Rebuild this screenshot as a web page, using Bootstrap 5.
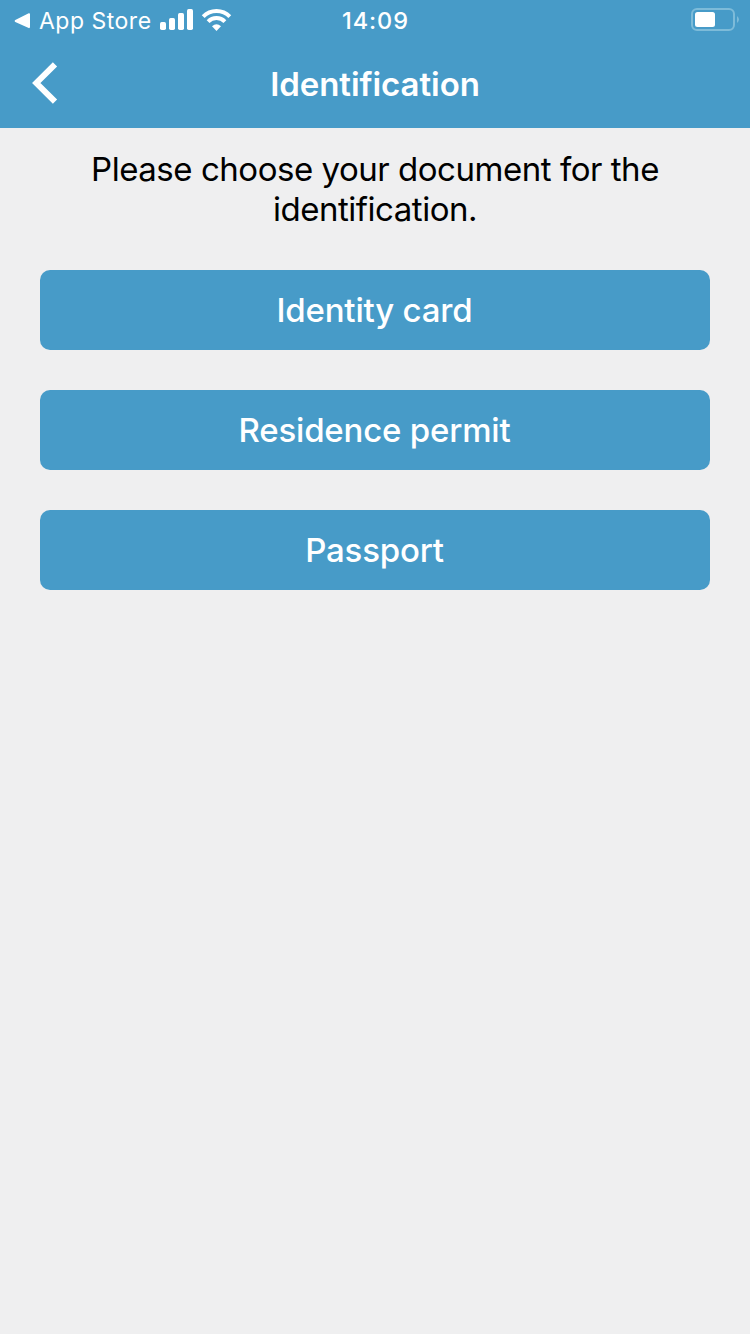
<!DOCTYPE html>
<html lang="en">
<head>
<meta charset="utf-8">
<meta name="viewport" content="width=device-width, initial-scale=1">
<title>Identification</title>
<link href="https://cdn.jsdelivr.net/npm/bootstrap@5.3.0/dist/css/bootstrap.min.css" rel="stylesheet">
<style>
  body { background: #efeff0; font-family: Inter, "Liberation Sans", sans-serif; color: #000; }
  .app-blue { background: #479bc8; color: #fff; }
  .status-row { height: 40px; padding: 0 11px 0 14px; line-height: 40px; }
  .status-row svg, .title-row svg { display: block; }
  .status-row svg { margin-bottom: 2px; }
  .status-row svg.return-mark { margin-bottom: 0; }
  .store-label { font-size: 23px; letter-spacing: .5px; margin: 1px 9px 0 9px; font-weight: 400; width: 112px; }
  .clock { font-size: 23.5px; font-weight: 500; letter-spacing: .9px; padding-top: 1px; margin-left: -2px; }
  .title-row { height: 88px; }
  .title-text { font-size: 33px; line-height: 88px; font-weight: 600; letter-spacing: -.05px; }
  .back-btn { padding: 0 32px; margin-bottom: 2px; }
  .prompt { font-size: 33px; line-height: 40px; padding-top: 21px; margin-bottom: 1px; letter-spacing: -.47px; }
  .choices { padding: 40px; gap: 40px; }
  .choice { height: 80px; border: 0; border-radius: 10px; font-size: 33px; line-height: 40px; font-weight: 500; letter-spacing: -.2px; padding-left: 11px; }
  .choice:hover { background: #3b8fbc; color: #fff; }
</style>
</head>
<body>
<header class="app-blue">
  <div class="status-row row g-0 align-items-center">
    <div class="col d-flex align-items-center">
      <svg class="return-mark" width="16" height="16" viewBox="0 0 16 16" fill="#fff"><path d="M14.700.3 1.300 7.100q-1.300.9 0 1.800l13.400 6.200q1.300.2 1.300-1V1.300q0-1.400-1.300-1z"/></svg>
      <span class="store-label text-nowrap">App Store</span>
      <svg width="33" height="21" viewBox="0 0 33 21" fill="#fff"><rect y="13" width="6" height="8" rx="1.7"/><rect x="9" y="9" width="6" height="12" rx="1.7"/><rect x="18" y="4" width="6" height="17" rx="1.7"/><rect x="27" width="6" height="21" rx="1.7"/></svg>
      <svg class="ms-2" width="31" height="22" viewBox="0 0 31 22" fill="none" stroke="#fff" stroke-width="4"><path d="M2.200 7.700a18.600 18.600 0 0 1 26.600 0"/><path d="M7.100 12.600a11.800 11.800 0 0 1 16.800 0"/><path d="M11 17.300q4.500-4.100 9 0L15.500 22z" fill="#fff" stroke="none"/></svg>
    </div>
    <div class="col-auto clock">14:09</div>
    <div class="col d-flex justify-content-end">
      <svg width="48" height="24" viewBox="0 0 48 24"><rect x="1" y="1" width="42" height="21" rx="5" fill="none" stroke="#7dbbd9" stroke-width="2"/><rect x="4" y="4" width="20" height="15" rx="2.5" fill="#fff"/><path d="M46 8q4 3.500 0 7z" fill="#7dbbd9"/></svg>
    </div>
  </div>
  <div class="title-row row g-0 align-items-center">
    <div class="col"><button class="btn back-btn border-0 rounded-0" aria-label="Back"><svg width="26" height="42" viewBox="0 0 26 42" fill="none" stroke="#fff" stroke-width="6"><path d="M23 2.300 4.300 21 23 39.700"/></svg></button></div>
    <h1 class="col-auto title-text m-0">Identification</h1>
    <div class="col"></div>
  </div>
</header>
<main>
  <p class="prompt text-center">Please choose your document for the<br>identification.</p>
  <div class="choices d-flex flex-column">
    <button class="btn app-blue choice w-100">Identity card</button>
    <button class="btn app-blue choice w-100">Residence permit</button>
    <button class="btn app-blue choice w-100">Passport</button>
  </div>
</main>
<script src="https://cdn.jsdelivr.net/npm/bootstrap@5.3.0/dist/js/bootstrap.bundle.min.js"></script>
</body>
</html>
